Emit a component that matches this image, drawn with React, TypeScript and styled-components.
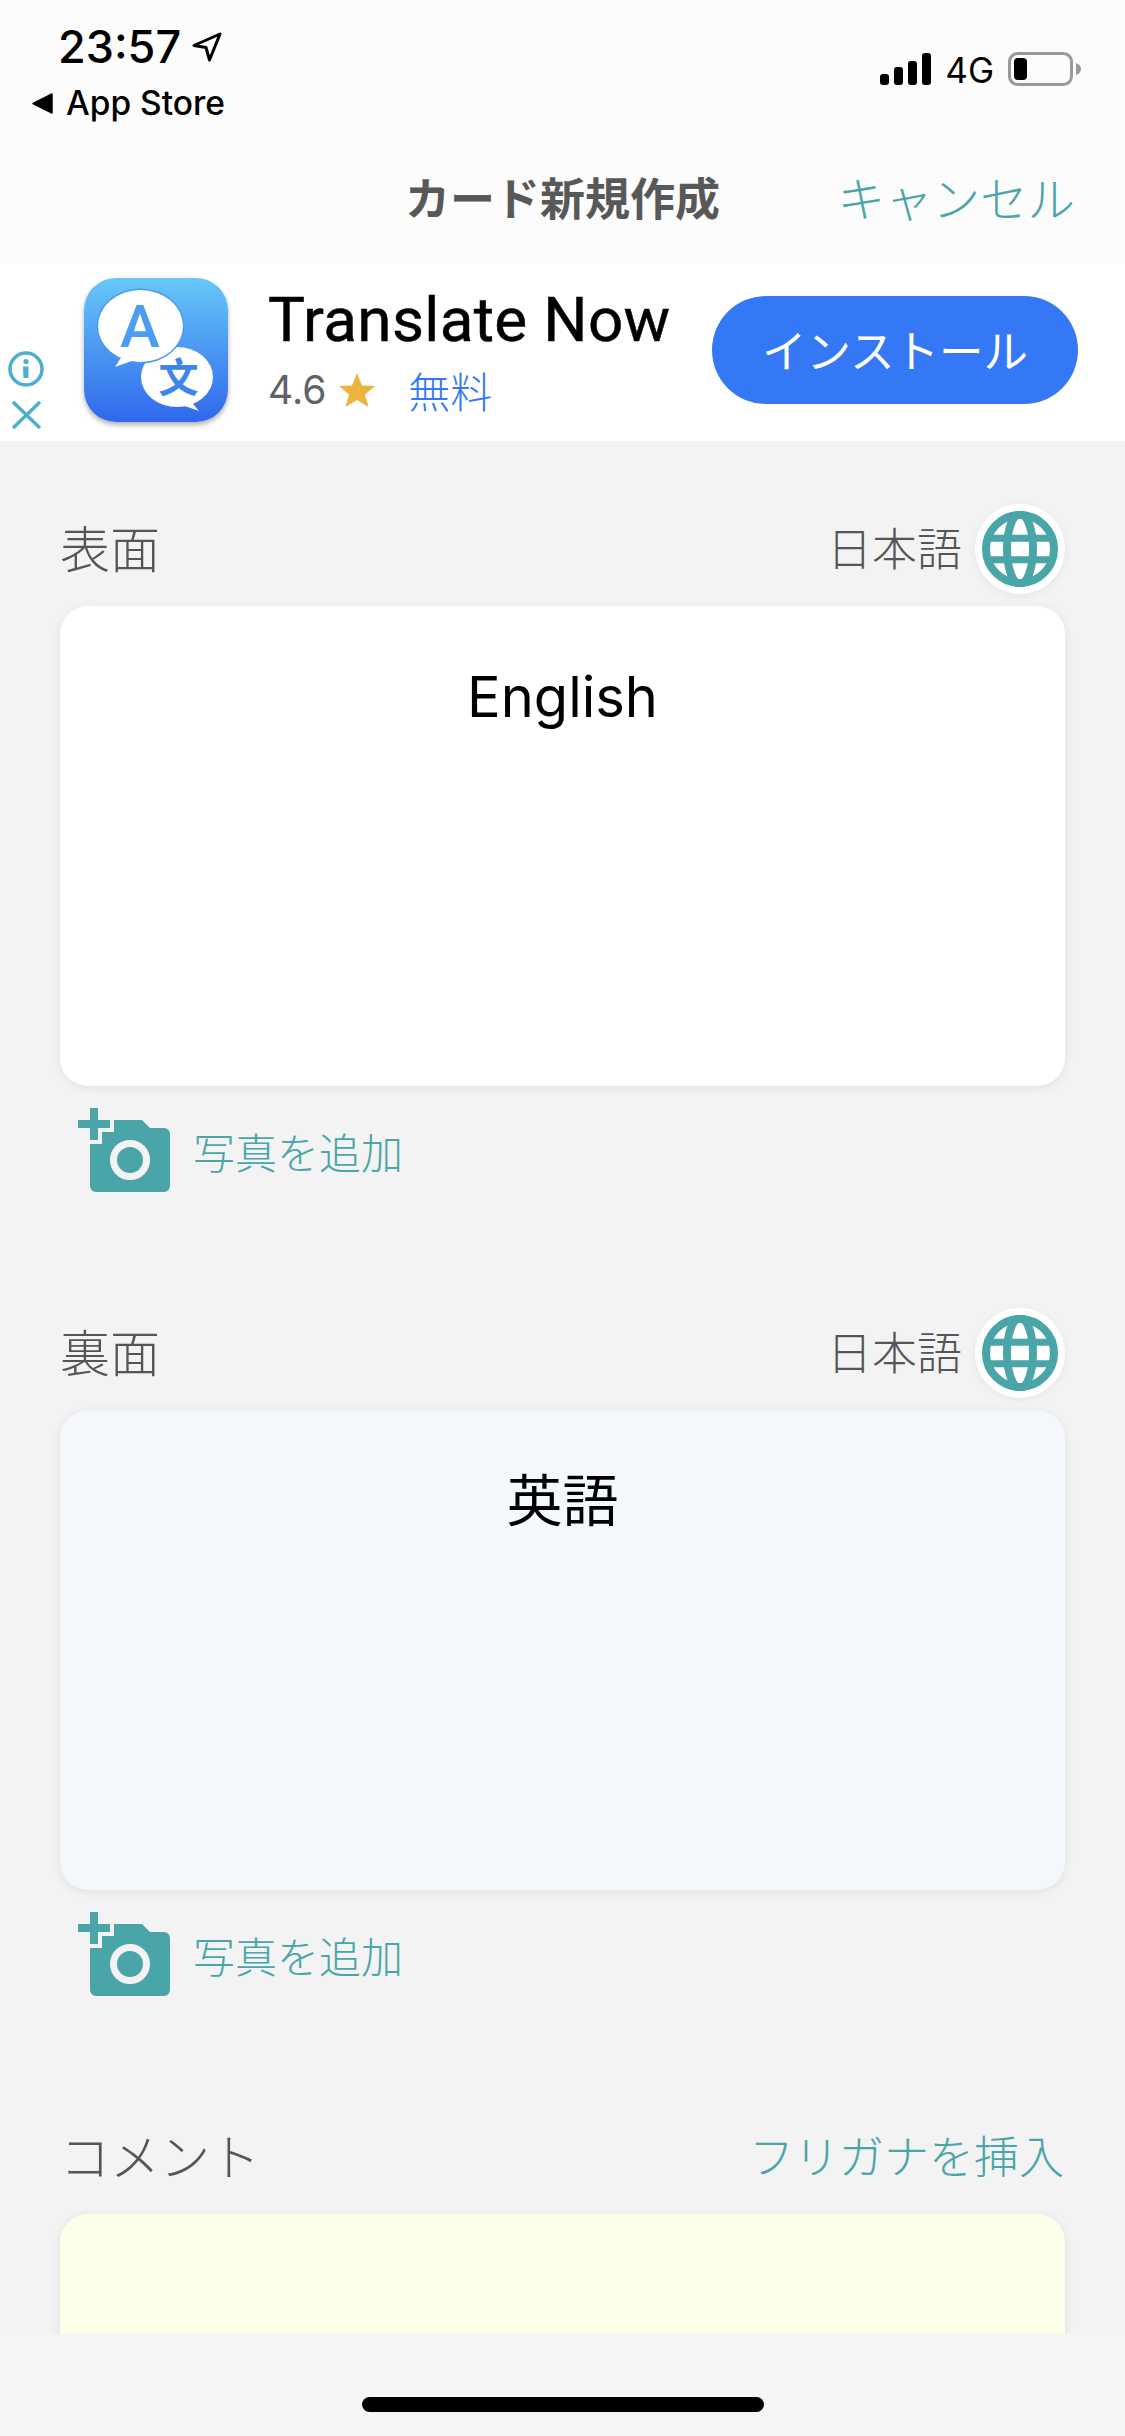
import styled, { createGlobalStyle } from "styled-components";

const JP = `"Inter", "Noto Sans CJK JP", sans-serif`;
const TEAL = "#4aa5a9";
const BLUE = "#3578f6";

const GlobalStyle = createGlobalStyle`
  html, body {
    margin: 0;
    padding: 0;
    background: #f5f5f5;
  }
  * {
    box-sizing: border-box;
  }
`;

const Screen = styled.div`
  width: 1125px;
  height: 2436px;
  display: flex;
  flex-direction: column;
  overflow: hidden;
  background: #f5f5f5;
  font-family: ${JP};
`;
const StatusBar = styled.div`
  height: 141px;
  flex: none;
  display: flex;
  justify-content: space-between;
  background: #fcfcfc;
  padding: 21px 43px 0 32px;
`;
const StatusLeft = styled.div`
  display: flex;
  flex-direction: column;
`;
const TimeRow = styled.div`
  display: flex;
  align-items: center;
  gap: 11px;
  padding-left: 26px;
  height: 52px;
`;
const Time = styled.span`
  font-size: 45px;
  line-height: 52px;
  font-weight: 500;
  color: #000;
`;
const BackRow = styled.div`
  display: flex;
  align-items: center;
  gap: 13px;
  height: 44px;
  margin-top: 8px;
`;
const BackText = styled.span`
  font-size: 33.5px;
  font-weight: 500;
  color: #000;
`;
const StatusRight = styled.div`
  display: flex;
  align-items: center;
  gap: 14px;
  height: 34px;
  margin-top: 31px;
`;
const Network = styled.span`
  font-size: 35px;
  font-weight: 400;
  color: #000;
  padding-top: 2px;
`;
const NavBar = styled.div`
  height: 122px;
  flex: none;
  display: grid;
  grid-template-columns: 1fr auto 1fr;
  align-items: center;
  background: #fcfcfc;
  padding: 0 50px 12px;
`;
const NavTitle = styled.h1`
  grid-column: 2;
  margin: 0;
  font-size: 45px;
  font-weight: 700;
  color: #585858;
`;
const Cancel = styled.span`
  justify-self: end;
  font-size: 47.5px;
  font-weight: 300;
  color: ${TEAL};
`;
const AdBar = styled.div`
  height: 178px;
  flex: none;
  display: flex;
  background: #fff;
  padding: 15px 47px 0 8px;
`;
const AdMarks = styled.div`
  width: 76px;
  flex: none;
  display: flex;
  flex-direction: column;
  gap: 13px;
  padding-top: 73px;
`;
const AdInfo = styled.div`
  flex: 1;
  display: flex;
  flex-direction: column;
  padding-left: 40px;
  margin-left: 144px;
`;
const AdName = styled.div`
  font-family: "Roboto", sans-serif;
  font-size: 62px;
  line-height: 70px;
  margin-top: 7px;
  font-weight: 400;
  letter-spacing: 0.35px;
  color: #000;
  white-space: nowrap;
  -webkit-text-stroke: 0.5px #000;
`;
const AdMeta = styled.div`
  display: flex;
  align-items: center;
  margin-top: 4px;
  white-space: nowrap;
`;
const Rating = styled.span`
  font-size: 39px;
  font-weight: 400;
  color: #5f6368;
  margin-right: 13px;
`;
const StarMark = styled.svg`
  flex: none;
`;
const Price = styled.span`
  font-size: 42px;
  font-weight: 300;
  color: ${BLUE};
  margin-left: 33px;
`;
const Install = styled.button`
  flex: none;
  margin-top: 18px;
  width: 366px;
  height: 108px;
  border: 0;
  border-radius: 54px;
  padding: 0 0 4px;
  background: ${BLUE};
  color: #fff;
  font-family: ${JP};
  font-size: 44.5px;
  font-weight: 400;
`;
const AppIconWrap = styled.div`
  position: absolute;
  top: 278px;
  left: 84px;
  width: 144px;
  height: 144px;
  border-radius: 32px;
  box-shadow: 0 3px 5px rgba(0, 0, 0, 0.3);
`;
const Content = styled.div`
  flex: 1;
  min-height: 0;
  overflow: hidden;
  background: #f3f3f3;
  padding: 63px 60px 0;
  display: flex;
  flex-direction: column;
  gap: 116px;
`;
const Section = styled.section`
  flex: none;
  display: flex;
  flex-direction: column;
`;
const SectionHead = styled.div`
  height: 90px;
  display: flex;
  align-items: center;
  justify-content: space-between;
`;
const SectionLabel = styled.span`
  font-size: 50px;
  font-weight: 300;
  color: #555;
  padding-bottom: 6px;
`;
const LangPicker = styled.div`
  display: flex;
  align-items: center;
  gap: 13px;
`;
const LangName = styled.span`
  font-size: 45px;
  font-weight: 300;
  color: #555;
  padding-bottom: 6px;
`;
const GlobeButton = styled.div`
  width: 90px;
  height: 90px;
  border-radius: 50%;
  background: #fff;
  display: flex;
  align-items: center;
  justify-content: center;
  box-shadow: 0 2px 8px rgba(0, 0, 0, 0.06);
`;
const Furigana = styled.span`
  font-size: 45px;
  font-weight: 300;
  color: ${TEAL};
  margin-right: 1px;
  padding-bottom: 6px;
`;
const Card = styled.div<{ $bg: string }>`
  margin-top: 12px;
  height: 480px;
  border-radius: 28px;
  background: ${(p) => p.$bg};
  box-shadow: 0 2px 10px rgba(0, 0, 0, 0.08);
  padding-top: 56px;
  text-align: center;
  font-size: 56px;
  line-height: 70px;
  font-weight: 400;
  color: #000;
`;
const AddPhoto = styled.div`
  margin-top: 22px;
  padding-left: 18px;
  display: flex;
  align-items: center;
  gap: 23px;
  height: 84px;
`;
const AddPhotoText = styled.span`
  font-size: 42px;
  font-weight: 300;
  color: ${TEAL};
`;
const HomeArea = styled.div`
  height: 102px;
  flex: none;
  background: #f5f5f5;
  padding-top: 63px;
  display: flex;
  justify-content: center;
`;
const HomeBar = styled.div`
  width: 402px;
  height: 15px;
  border-radius: 8px;
  background: #000;
`;

function Globe() {
  return (
    <svg width="76" height="76" viewBox="0 0 76 76">
      <circle cx="38" cy="38" r="34" fill="#fff" stroke={TEAL} strokeWidth="8" />
      <ellipse cx="38" cy="38" rx="13" ry="35" fill="none" stroke={TEAL} strokeWidth="8" />
      <path d="M3 27.3H73M3 48.7H73" stroke={TEAL} strokeWidth="7" />
    </svg>
  );
}

function Camera() {
  return (
    <svg width="92" height="84" viewBox="0 0 92 84">
      <path
        d="M36 12H64L72 20H86a6 6 0 0 1 6 6V78a6 6 0 0 1-6 6H18a6 6 0 0 1-6-6V36H24V24H36Z"
        fill={TEAL}
      />
      <path d="M12 0H20V12H32V20H20V32H12V20H0V12H12Z" fill={TEAL} />
      <circle cx="52" cy="52" r="16.5" fill="none" stroke="#f3f3f3" strokeWidth="7" />
    </svg>
  );
}

function AppIcon() {
  return (
    <AppIconWrap>
      <svg width="144" height="144" viewBox="0 0 144 144">
        <defs>
          <linearGradient id="adIcon" x1="0" y1="0" x2="0" y2="1">
            <stop offset="0" stopColor="#67c8f9" />
            <stop offset="1" stopColor="#2f68ec" />
          </linearGradient>
        </defs>
        <rect width="144" height="144" rx="32" fill="url(#adIcon)" />
        <ellipse cx="93" cy="99" rx="36" ry="30" fill="#fff" />
        <path d="M104 120L115 133L98 127Z" fill="#fff" />
        <ellipse cx="56.5" cy="48" rx="44" ry="37.5" fill="#4a98f0" />
        <path d="M40 75L31 89L56 80Z" fill="#fff" />
        <ellipse cx="56.5" cy="48" rx="42.5" ry="36" fill="#fff" />
        <text x="56" y="69" textAnchor="middle" fontFamily="Roboto, sans-serif" fontSize="60" fontWeight="500" fill="#4a9df1">
          A
        </text>
        <text x="94.5" y="114" textAnchor="middle" fontFamily="'Noto Sans CJK SC', sans-serif" fontSize="40" fontWeight="700" fill="#3e84ef">
          文
        </text>
      </svg>
    </AppIconWrap>
  );
}

export default function App() {
  return (
    <Screen>
      <GlobalStyle />
      <StatusBar>
        <StatusLeft>
          <TimeRow>
            <Time>23:57</Time>
            <svg width="30" height="30" viewBox="0 0 30 30">
              <path d="M28 2L2 13.5L14 15.5L17.5 28Z" fill="none" stroke="#000" strokeWidth="3" strokeLinejoin="round" />
            </svg>
          </TimeRow>
          <BackRow>
            <svg width="21" height="21" viewBox="0 0 21 21">
              <path d="M20 1V20L1 10.5Z" fill="#000" stroke="#000" strokeWidth="1.5" strokeLinejoin="round" />
            </svg>
            <BackText>App Store</BackText>
          </BackRow>
        </StatusLeft>
        <StatusRight>
          <svg width="51" height="32" viewBox="0 0 51 32">
            <rect x="0" y="21" width="9" height="11" rx="3" />
            <rect x="14" y="14" width="9" height="18" rx="3" />
            <rect x="28" y="8" width="9" height="24" rx="3" />
            <rect x="42" y="0" width="9" height="32" rx="3" />
          </svg>
          <Network>4G</Network>
          <svg width="74" height="34" viewBox="0 0 74 34">
            <rect x="1.5" y="1.5" width="62" height="31" rx="8" fill="none" stroke="#999" strokeWidth="3" />
            <rect x="6" y="6" width="13" height="22" rx="4" fill="#000" />
            <path d="M68 11C71 12 73 14 73 17C73 20 71 22 68 23Z" fill="#999" />
          </svg>
        </StatusRight>
      </StatusBar>

      <NavBar>
        <NavTitle>カード新規作成</NavTitle>
        <Cancel>キャンセル</Cancel>
      </NavBar>

      <AdBar>
        <AdMarks>
          <svg width="36" height="36" viewBox="0 0 36 36">
            <circle cx="18" cy="18" r="16" fill="none" stroke="#4cb0cc" strokeWidth="3.5" />
            <circle cx="18" cy="10.5" r="2.6" fill="#4cb0cc" />
            <path d="M15 15.5H20.5V27H15.5Z" fill="#4cb0cc" />
          </svg>
          <svg width="36" height="30" viewBox="0 0 36 30">
            <path d="M5 2L32 28M32 2L5 28" stroke="#4cb0cc" strokeWidth="3.5" fill="none" />
          </svg>
        </AdMarks>
        <AppIcon />
        <AdInfo>
          <AdName>Translate Now</AdName>
          <AdMeta>
            <Rating>4.6</Rating>
            <StarMark width="36" height="34" viewBox="0 0 36 34">
              <path d="M18 0L23 12.5L36 13L26 21.5L29.5 34L18 27L6.5 34L10 21.5L0 13L13 12.5Z" fill="#edb33c" />
            </StarMark>
            <Price>無料</Price>
          </AdMeta>
        </AdInfo>
        <Install>インストール</Install>
      </AdBar>

      <Content>
        <Section>
          <SectionHead>
            <SectionLabel>表面</SectionLabel>
            <LangPicker>
              <LangName>日本語</LangName>
              <GlobeButton>
                <Globe />
              </GlobeButton>
            </LangPicker>
          </SectionHead>
          <Card $bg="#ffffff">English</Card>
          <AddPhoto>
            <Camera />
            <AddPhotoText>写真を追加</AddPhotoText>
          </AddPhoto>
        </Section>

        <Section>
          <SectionHead>
            <SectionLabel>裏面</SectionLabel>
            <LangPicker>
              <LangName>日本語</LangName>
              <GlobeButton>
                <Globe />
              </GlobeButton>
            </LangPicker>
          </SectionHead>
          <Card $bg="#f4f7fb">英語</Card>
          <AddPhoto>
            <Camera />
            <AddPhotoText>写真を追加</AddPhotoText>
          </AddPhoto>
        </Section>

        <Section>
          <SectionHead>
            <SectionLabel>コメント</SectionLabel>
            <Furigana>フリガナを挿入</Furigana>
          </SectionHead>
          <Card $bg="#fdffe8" />
        </Section>
      </Content>

      <HomeArea>
        <HomeBar />
      </HomeArea>
    </Screen>
  );
}
